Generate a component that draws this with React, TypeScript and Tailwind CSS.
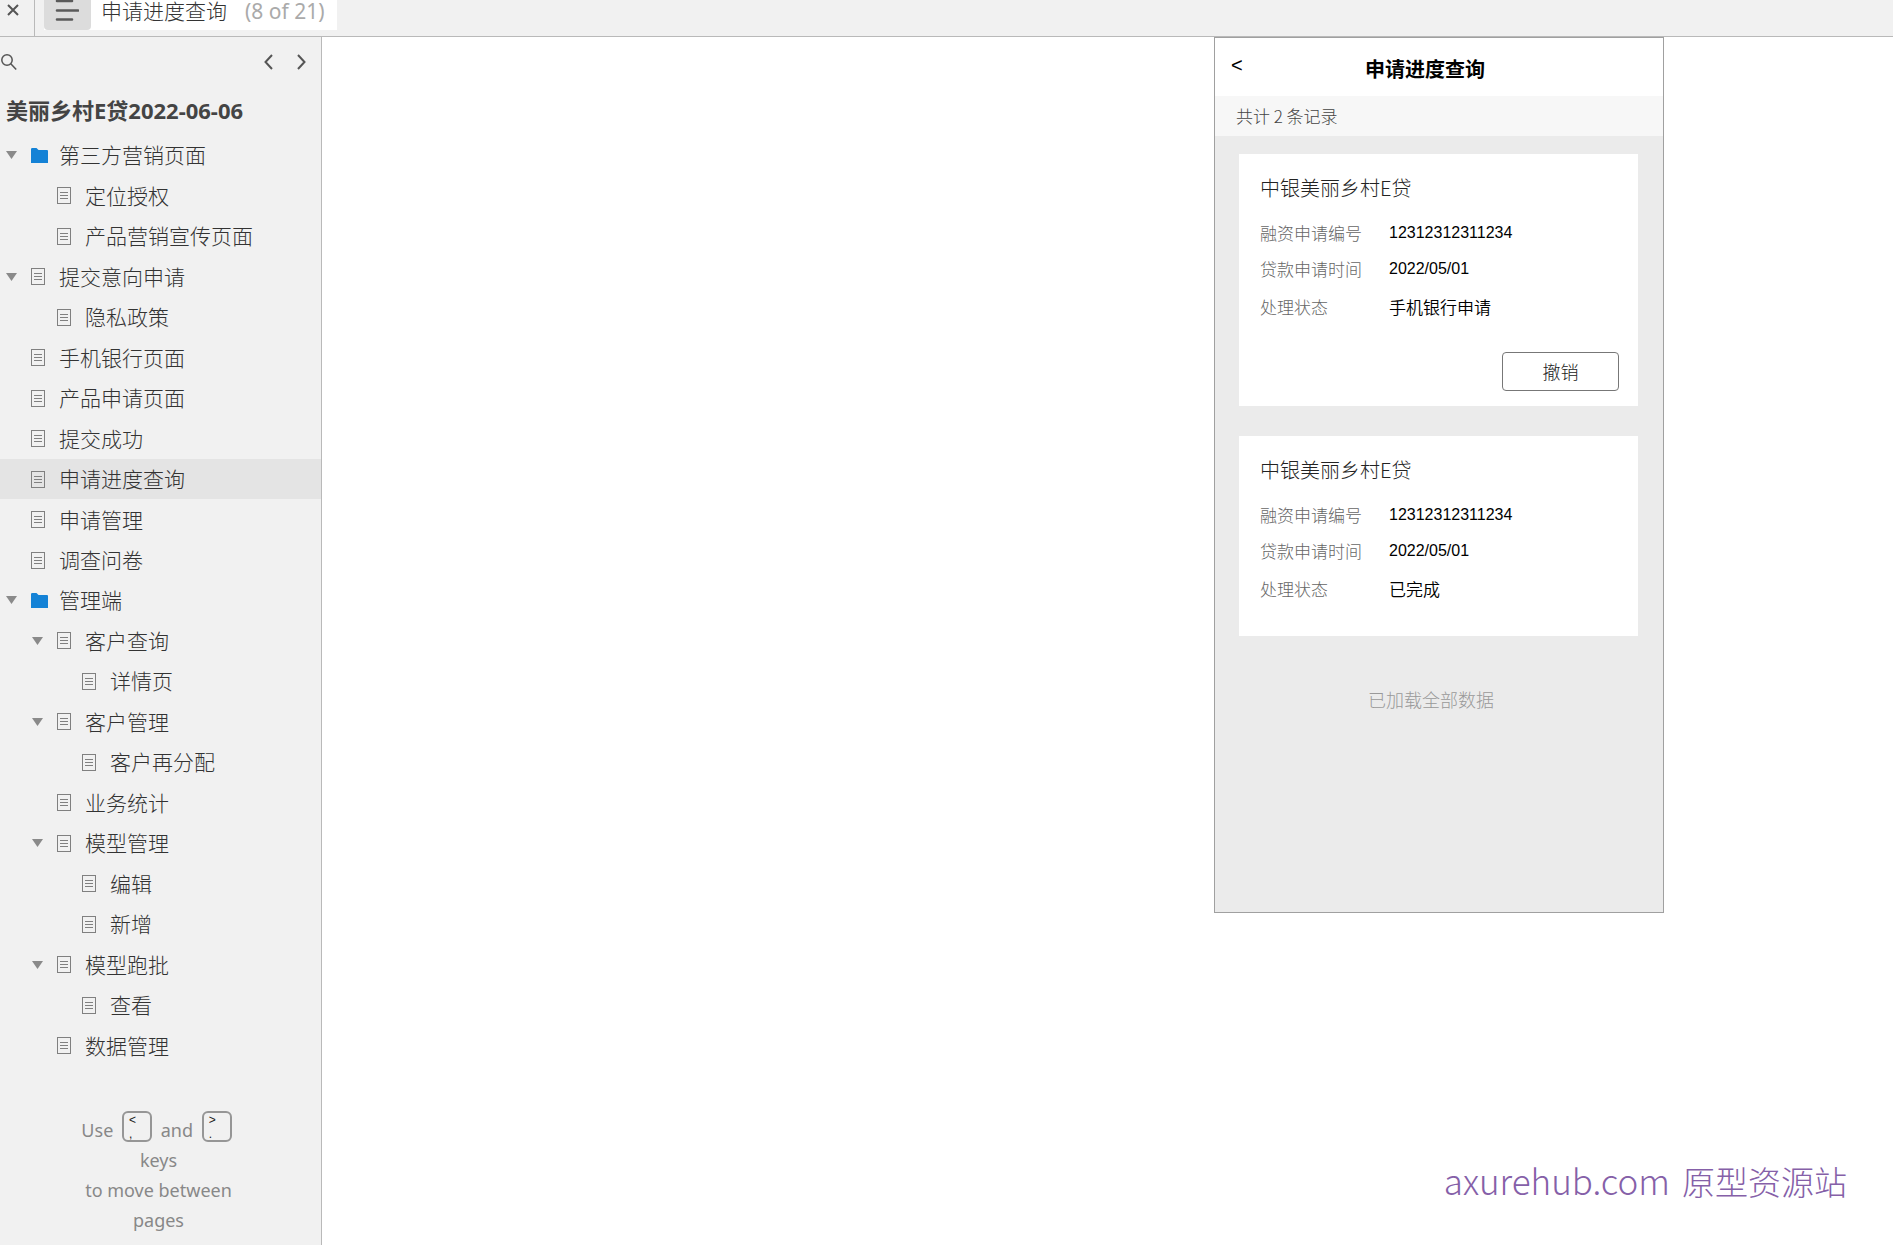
import { useState } from "react";
import clsx from "clsx";

type PageNode = {
  name: string;
  level: 0 | 1 | 2;
  folder?: boolean;
  open?: boolean;
};

const pages: PageNode[] = [
  { name: "第三方营销页面", level: 0, folder: true, open: true },
  { name: "定位授权", level: 1 },
  { name: "产品营销宣传页面", level: 1 },
  { name: "提交意向申请", level: 0, open: true },
  { name: "隐私政策", level: 1 },
  { name: "手机银行页面", level: 0 },
  { name: "产品申请页面", level: 0 },
  { name: "提交成功", level: 0 },
  { name: "申请进度查询", level: 0 },
  { name: "申请管理", level: 0 },
  { name: "调查问卷", level: 0 },
  { name: "管理端", level: 0, folder: true, open: true },
  { name: "客户查询", level: 1, open: true },
  { name: "详情页", level: 2 },
  { name: "客户管理", level: 1, open: true },
  { name: "客户再分配", level: 2 },
  { name: "业务统计", level: 1 },
  { name: "模型管理", level: 1, open: true },
  { name: "编辑", level: 2 },
  { name: "新增", level: 2 },
  { name: "模型跑批", level: 1, open: true },
  { name: "查看", level: 2 },
  { name: "数据管理", level: 1 },
];

const indents = ["pl-[6px]", "pl-[32px]", "pl-[57px]"];

const records = [
  { id: "12312312311234", date: "2022/05/01", status: "手机银行申请", cancelable: true },
  { id: "12312312311234", date: "2022/05/01", status: "已完成", cancelable: false },
];

function PageIcon() {
  return (
    <svg className="w-[14px] h-[17px]" viewBox="0 0 14 17" fill="none" stroke="#808080">
      <rect x="0.5" y="0.5" width="13" height="16" />
      <path d="M3 5.5h8M3 8.5h8M3 11.5h8" />
    </svg>
  );
}

function FolderIcon() {
  return (
    <svg className="w-[17px] h-[15px]" viewBox="0 0 17 15" fill="#1482d6">
      <path d="M0 1.2Q0 0 1.2 0H5.5L7.5 2H16Q17 2 17 3V15H0Z" />
    </svg>
  );
}

function Chevron({ d, label }: { d: string; label: string }) {
  return (
    <button aria-label={label} className="w-[9px] h-4">
      <svg className="w-[9px] h-4" viewBox="0 0 9 16" fill="none" stroke="#555" strokeWidth="2">
        <path d={d} />
      </svg>
    </button>
  );
}

function KeyCap({ top, bottom }: { top: string; bottom: string }) {
  return (
    <kbd className="inline-flex flex-col w-[30px] h-[31px] mx-1 rounded-[6px] border-2 border-[#969696] pl-[5px] align-[13px] text-left font-['Liberation_Sans',sans-serif] text-[12px] leading-[14px] text-[#222]">
      <span>{top}</span>
      <span>{bottom}</span>
    </kbd>
  );
}

function TopBar() {
  return (
    <header className="flex h-[37px] bg-[#f1f1f1] border-b border-[#b9b9b9]">
      <button aria-label="关闭" className="w-[35px] h-9 border-r border-[#b9b9b9] pl-[7px] shrink-0">
        <svg className="w-3 h-3 mt-1 mb-5" viewBox="0 0 12 12" stroke="#555" strokeWidth="2">
          <path d="M1 1l10 10M11 1L1 11" />
        </svg>
      </button>
      <div className="flex ml-[9px] h-[30px] bg-white pr-3 whitespace-nowrap">
        <button aria-label="页面列表" className="w-[47px] h-[30px] bg-[#dcdcdc] rounded-b-[4px] pl-[11px]">
          <svg className="w-6 h-[30px]" viewBox="0 0 24 30" stroke="#5a5a5a" strokeWidth="2.6" strokeLinecap="round">
            <path d="M2 1h15M2 10.5h21M2 19.5h15" />
          </svg>
        </button>
        <span className="ml-[10px] leading-[22px] text-[21px] text-[#333]">申请进度查询</span>
        <span className="ml-[18px] leading-[22px] text-[21px] font-normal text-[#aaa]">(8 of 21)</span>
      </div>
    </header>
  );
}

function Sidebar() {
  const [current, setCurrent] = useState("申请进度查询");

  return (
    <aside className="w-[322px] shrink-0 bg-[#f1f1f1] border-r border-[#b9b9b9]">
      <div className="flex items-center h-[50px] pr-[15px]">
        <button aria-label="搜索" className="w-4 h-4 ml-[1px] mr-auto">
          <svg className="w-4 h-4" viewBox="0 0 16 16" fill="none" stroke="#555" strokeWidth="1.5">
            <circle cx="6" cy="6" r="5.2" />
            <path d="M9.8 9.8l5.4 5.6" />
          </svg>
        </button>
        <div className="flex gap-6">
          <Chevron label="上一页" d="M8 1L1.5 8L8 15" />
          <Chevron label="下一页" d="M1 1l6.5 7L1 15" />
        </div>
      </div>

      <h1 className="mt-2 h-[30px] leading-[30px] pl-[6px] text-[22px] font-bold text-[#444]">
        美丽乡村E贷2022-06-06
      </h1>

      <ul className="mt-[10px] grid auto-rows-fr h-[931px]">
        {pages.map((page) => (
          <li
            key={page.name}
            className={clsx("flex items-center", indents[page.level], page.name === current && "bg-[#e4e4e4]")}
          >
            <span className="w-[25px] flex items-center shrink-0">
              {page.open && (
                <button aria-label="收起">
                  <svg className="w-[11px] h-2" viewBox="0 0 11 8" fill="#8a8a8a">
                    <path d="M0 0h11L5.5 8z" />
                  </svg>
                </button>
              )}
            </span>
            <a
              href="#"
              onClick={() => setCurrent(page.name)}
              className="flex items-center text-[21px] leading-[30px] text-[#333]"
            >
              <span className="w-7 shrink-0">{page.folder ? <FolderIcon /> : <PageIcon />}</span>
              {page.name}
            </a>
          </li>
        ))}
      </ul>

      <p className="mt-[45px] pr-1 text-center text-[18px] leading-[30px] font-normal text-[#888]">
        Use <KeyCap top="<" bottom="," /> and <KeyCap top=">" bottom="." />
        <br />
        keys
        <br />
        to move between
        <br />
        pages
      </p>
    </aside>
  );
}

function RecordCard({ record }: { record: (typeof records)[number] }) {
  return (
    <article className="bg-white pt-4 pl-[21px] pr-[19px]">
      <h3 className="h-9 leading-9 text-[20px] text-[#222]">中银美丽乡村E贷</h3>
      <dl className="mt-[9px] grid grid-cols-[129px_1fr] grid-rows-[36px_36px_40px] items-center text-[17px] text-black">
        <dt className="text-[#666]">融资申请编号</dt>
        <dd className="text-[16px] leading-8 font-['Liberation_Sans',sans-serif]">{record.id}</dd>
        <dt className="text-[#666]">贷款申请时间</dt>
        <dd className="text-[16px] leading-8 font-['Liberation_Sans',sans-serif]">{record.date}</dd>
        <dt className="text-[#666]">处理状态</dt>
        <dd className="font-[350]">{record.status}</dd>
      </dl>
      {record.cancelable ? (
        <div className="flex justify-end mt-[25px] pb-[15px]">
          <button className="w-[117px] h-[39px] rounded-[4px] border border-[#777] text-[18px] text-[#222]">撤销</button>
        </div>
      ) : (
        <div className="h-[27px]" />
      )}
    </article>
  );
}

function Phone() {
  return (
    <section className="w-[450px] min-h-[876px] border border-[#a0a0a0] bg-[#ebebeb] font-['Noto_Sans_CJK_SC',sans-serif]">
      <div className="grid grid-cols-[34px_1fr_78px] items-center h-[58px] bg-white pl-4 text-black">
        <button aria-label="返回" className="text-left text-[20px] leading-6 pb-1 font-['Liberation_Sans',sans-serif]">
          &lt;
        </button>
        <h2 className="text-center text-[20px] leading-7 pt-1 font-bold">申请进度查询</h2>
      </div>
      <p className="h-10 leading-10 pl-[21px] bg-[#f7f7f7] text-[17px] text-[#444]">共计 2 条记录</p>
      <div className="flex flex-col gap-[30px] pt-[18px] pl-6 pr-[25px]">
        {records.map((record, index) => (
          <RecordCard key={index} record={record} />
        ))}
      </div>
      <p className="mt-[49px] pr-4 text-center text-[18px] leading-7 text-[#999]">已加载全部数据</p>
    </section>
  );
}

export default function App() {
  return (
    <div className="relative flex flex-col min-h-screen bg-white font-light font-['Noto_Sans','Noto_Sans_CJK_SC',sans-serif]">
      <TopBar />
      <div className="flex flex-1">
        <Sidebar />
        <main className="flex flex-1 items-start justify-end pr-[229px]">
          <Phone />
        </main>
      </div>
      <div className="absolute right-[46px] bottom-[40px] flex items-baseline gap-3 leading-[48px] text-[#8560a8] font-['Noto_Sans_CJK_SC',sans-serif]">
        <span className="text-[35px]">axurehub.com</span>
        <span className="text-[33px]">原型资源站</span>
      </div>
    </div>
  );
}
